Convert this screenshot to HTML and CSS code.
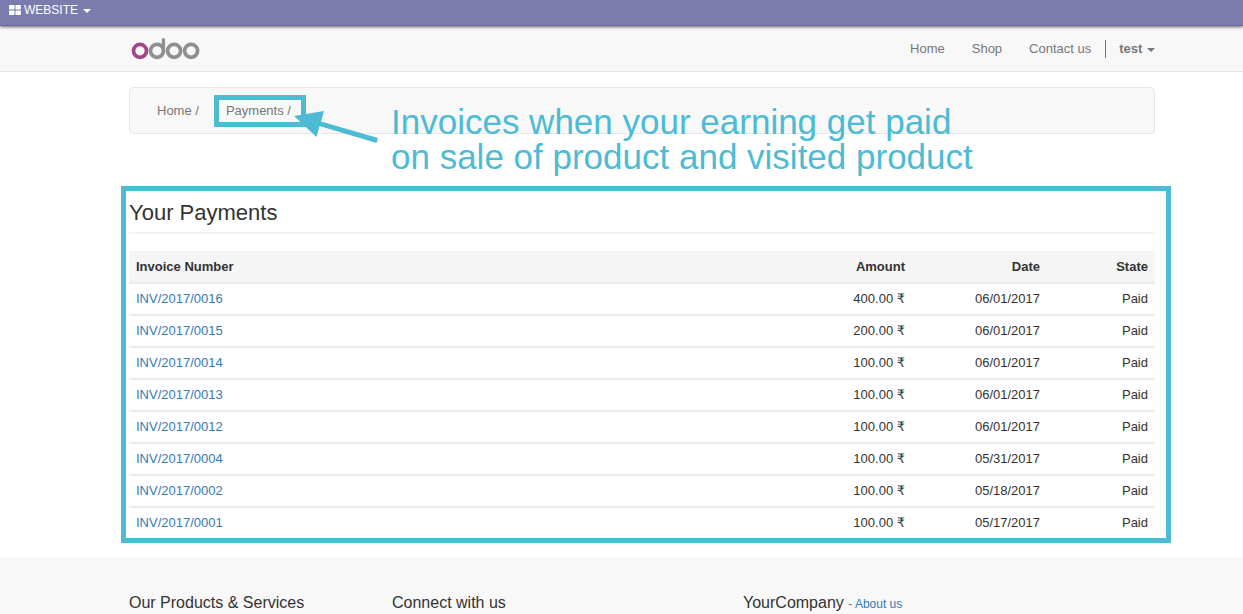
FILE: index.html
```html
<!DOCTYPE html>
<html lang="en">
<head>
<meta charset="utf-8">
<title>Your Payments</title>
<link rel="stylesheet" href="styles.css">
</head>
<body>
<div class="topbar">
  <button class="topbar-menu" type="button">
    <svg class="grid-icon" width="12" height="10" viewBox="0 0 12 10" aria-hidden="true"><rect width="5.5" height="4.5" rx=".7"/><rect x="6.4" width="5.5" height="4.5" rx=".7"/><rect y="5.4" width="5.5" height="4.5" rx=".7"/><rect x="6.4" y="5.4" width="5.5" height="4.5" rx=".7"/></svg>
    <span>WEBSITE</span>
    <span class="caret"></span>
  </button>
</div>
<header class="header">
  <a class="logo" href="#" aria-label="odoo">
    <svg width="70" height="24" viewBox="0 0 70 24" fill="none" stroke="#8f8f8f" stroke-width="3.7" aria-hidden="true"><circle cx="27" cy="13.8" r="6.5"/><path d="M33.4 2.6V14" stroke-width="3.3" stroke-linecap="round"/><circle cx="44.1" cy="13.8" r="6.5"/><circle cx="61.1" cy="13.8" r="6.5"/><circle cx="10" cy="13.8" r="6.5" stroke="#a24689"/></svg>
  </a>
  <nav class="nav">
    <a href="#">Home</a>
    <a href="#">Shop</a>
    <a href="#">Contact us</a>
    <button class="user" type="button">test <span class="caret"></span></button>
  </nav>
</header>
<main class="main">
  <nav class="crumbs" aria-label="Breadcrumb">
    <a href="#">Home /</a>
    <a class="marked" href="#">Payments /</a>
    <div class="note">
      <svg class="arrow" width="84" height="36" viewBox="0 0 84 36" aria-hidden="true"><path d="M0 9L30 4L27 14.500L84 31L82.500 36L25.500 19L22.500 30Z"/></svg>
      <p class="note-text">Invoices when your earning get paid<br>on sale of product and visited product</p>
    </div>
  </nav>
  <section class="payments">
    <h1 class="title">Your Payments</h1>
    <table class="table">
      <thead><tr><th>Invoice Number</th><th class="amount">Amount</th><th class="date">Date</th><th class="state">State</th></tr></thead>
      <tbody>
        <tr><td><a href="#">INV/2017/0016</a></td><td>400.00 ₹</td><td>06/01/2017</td><td>Paid</td></tr>
        <tr><td><a href="#">INV/2017/0015</a></td><td>200.00 ₹</td><td>06/01/2017</td><td>Paid</td></tr>
        <tr><td><a href="#">INV/2017/0014</a></td><td>100.00 ₹</td><td>06/01/2017</td><td>Paid</td></tr>
        <tr><td><a href="#">INV/2017/0013</a></td><td>100.00 ₹</td><td>06/01/2017</td><td>Paid</td></tr>
        <tr><td><a href="#">INV/2017/0012</a></td><td>100.00 ₹</td><td>06/01/2017</td><td>Paid</td></tr>
        <tr><td><a href="#">INV/2017/0004</a></td><td>100.00 ₹</td><td>05/31/2017</td><td>Paid</td></tr>
        <tr><td><a href="#">INV/2017/0002</a></td><td>100.00 ₹</td><td>05/18/2017</td><td>Paid</td></tr>
        <tr><td><a href="#">INV/2017/0001</a></td><td>100.00 ₹</td><td>05/17/2017</td><td>Paid</td></tr>
      </tbody>
    </table>
  </section>
</main>
<footer class="footer">
  <h2>Our Products &amp; Services</h2>
  <h2>Connect with us</h2>
  <h2>YourCompany <small>- <a href="#">About us</a></small></h2>
</footer>
</body>
</html>
```
FILE: styles.css
```css
* { box-sizing: border-box; }
body {
  margin: 0;
  min-height: 100vh;
  display: flex;
  flex-direction: column;
  background: #fff;
  color: #333;
  font: 13px/18px "Liberation Sans", Arial, "DejaVu Sans", sans-serif;
}
a { color: #337ab7; text-decoration: none; }
button { border: 0; padding: 0; background: none; font: inherit; cursor: pointer; }
.caret {
  display: inline-block;
  border: 4px solid transparent;
  border-top-color: currentColor;
  border-bottom: 0;
}
.topbar {
  position: relative;
  height: 26px;
  padding: 1px 9px;
  background: #7c7bad;
  border-bottom: 1px solid #6c6a9e;
  box-shadow: 0 1px 3px rgba(0, 0, 0, .6);
}
.topbar-menu { display: flex; align-items: center; gap: 3px; color: #fff; font-size: 12px; }
.topbar-menu .caret { margin: 2px 0 0 2px; }
.grid-icon { fill: #fff; }
.header {
  display: flex;
  align-items: center;
  justify-content: space-between;
  height: 46px;
  padding: 0 88px 0 130px;
  background: #f8f8f8;
  border-bottom: 1px solid #e7e7e7;
}
.logo { display: flex; }
.nav { display: flex; align-items: center; gap: 27px; padding-top: 1px; }
.nav a, .user, .crumbs a { color: #777; }
.user {
  margin-left: -13px;
  padding-left: 13px;
  border-left: 1px solid #777;
  font-weight: bold;
}
.user .caret { margin-left: 1px; vertical-align: middle; }
.main { padding: 15px 88px 14px 129px; }
.crumbs {
  position: relative;
  display: flex;
  align-items: center;
  gap: 15px;
  height: 47px;
  padding-left: 27px;
  background: #f8f8f8;
  border: 1px solid #e7e7e7;
  border-radius: 4px;
}
.crumbs .marked { padding: 2px 10px 2px 7px; border: 5px solid #4dbbd3; height: 32px; }
.note {
  position: absolute;
  left: 164px;
  top: 16px;
  display: flex;
  gap: 13px;
  color: #4dbbd3;
}
.arrow { flex: none; margin-top: 3px; fill: #4dbbd3; }
.note-text { margin: 0; font-size: 35px; line-height: 35px; white-space: nowrap; }
.payments {
  margin: 52px -16px 0 -8px;
  padding: 10px 11px 0 3px;
  border: 5px solid #4dbbd3;
}
.title {
  margin: 0 0 17px;
  padding-bottom: 7px;
  border-bottom: 2px solid #f3f3f3;
  font-size: 22px;
  line-height: 24px;
  font-weight: normal;
}
.table { width: 100%; table-layout: fixed; border-collapse: separate; border-spacing: 0; }
th, td { height: 32px; padding: 0 7px; text-align: right; }
th { height: 31px; background: #f5f5f5; }
td { border-top: 2px solid #ebebeb; }
th:first-child, td:first-child { text-align: left; }
.amount, .date { width: 135px; }
.state { width: 108px; }
.footer {
  flex: 1;
  display: grid;
  grid-template-columns: 263fr 351fr 412fr;
  padding: 37px 88px 0 129px;
  background: #f8f8f8;
}
.footer h2 { margin: 0; font-size: 16px; line-height: 18px; font-weight: normal; }
.footer small { font-size: 12px; color: #777; }
```
